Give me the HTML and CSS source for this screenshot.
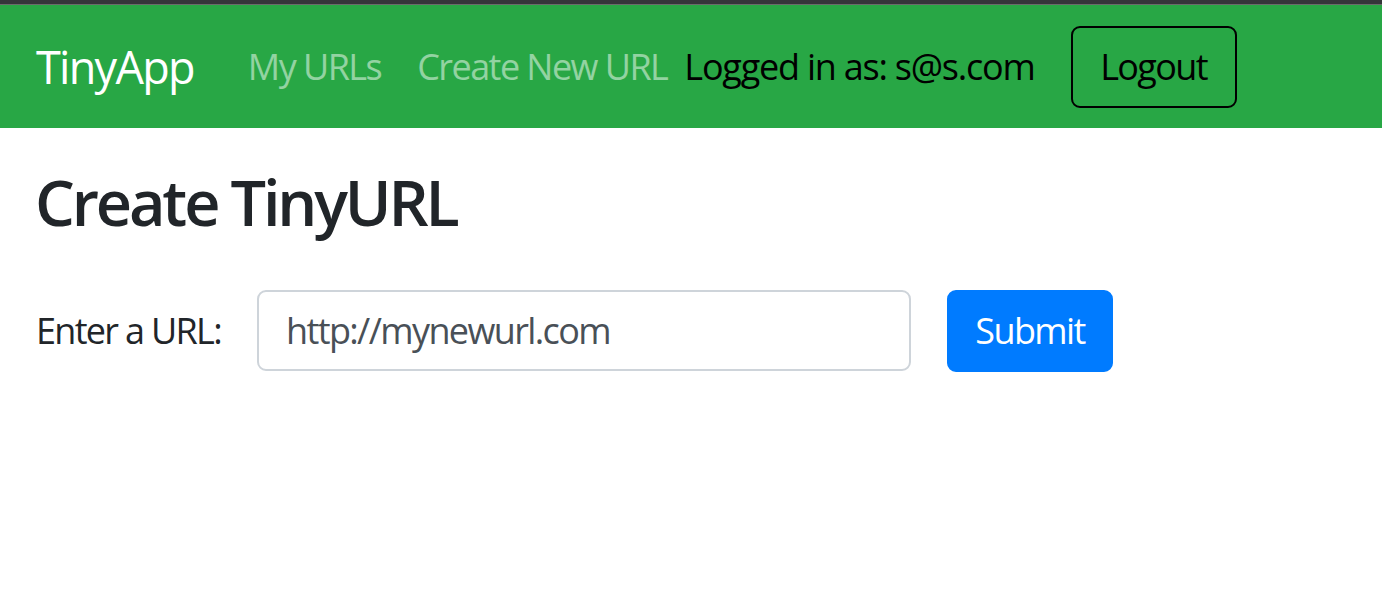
FILE: index.html
```html
<!DOCTYPE html>
<html lang="en">
<head>
<meta charset="utf-8">
<title>TinyApp</title>
<link rel="stylesheet" href="styles.css">
</head>
<body>
<div class="chrome-edge"></div>
<nav class="navbar">
  <a class="brand" href="#">TinyApp</a>
  <a class="nav-link" href="#">My URLs</a>
  <a class="nav-link" href="#">Create New URL</a>
  <span class="user">Logged in as: s@s.com</span>
  <button class="btn btn-outline" type="button">Logout</button>
</nav>
<main class="content">
  <h1 class="title">Create TinyURL</h1>
  <form class="url-form">
    <label class="label" for="longURL">Enter a URL:</label>
    <input class="input" id="longURL" type="text" value="http://mynewurl.com">
    <button class="btn btn-primary" type="button">Submit</button>
  </form>
</main>
</body>
</html>
```

FILE: styles.css
```css
* { box-sizing: border-box; }
html, body { margin: 0; padding: 0; background: #fff; }
body {
  font-family: "Open Sans", "Noto Sans", "Liberation Sans", sans-serif;
  color: #212529;
  letter-spacing: -0.042em;
}
.chrome-edge {
  height: 5px;
  background: #35363a;
  border-bottom: 1px solid #6b6b6b;
}
.navbar {
  display: flex;
  align-items: center;
  background: #28a745;
  height: 123px;
  padding: 0 36px;
}
.brand {
  font-size: 45px;
  color: #fff;
  text-decoration: none;
  margin-right: 36px;
  line-height: 1.5;
  letter-spacing: -0.038em;
}
.nav-link {
  font-size: 36px;
  color: rgba(255, 255, 255, 0.5);
  text-decoration: none;
  padding: 0 18px;
  line-height: 1.5;
  letter-spacing: -0.043em;
}
.nav-link + .nav-link {
  padding-right: 17px;
}
.user {
  font-size: 36px;
  color: #000;
  line-height: 1.5;
  letter-spacing: -0.034em;
}
.btn {
  font-family: inherit;
  font-size: 36px;
  line-height: 54px;
  padding: 12px 0;
  width: 166px;
  border-radius: 9px;
  border: 2px solid transparent;
  cursor: pointer;
  letter-spacing: -0.045em;
}
.btn-outline {
  margin-left: 36px;
  background: transparent;
  color: #000;
  border-color: #000;
}
.btn-primary {
  background: #007bff;
  border-color: #007bff;
  color: #fff;
  margin-left: 36px;
}
.content {
  padding: 0 36px;
}
.title {
  font-size: 63px;
  font-weight: 600;
  line-height: 1.2;
  margin: 36px 0 50px -1px;
  letter-spacing: -0.05em;
}
.url-form {
  display: flex;
  align-items: center;
}
.label {
  font-size: 36px;
  width: 221px;
  letter-spacing: -0.047em;
}
.input {
  font-family: inherit;
  width: 654px;
  height: 81px;
  font-size: 36px;
  padding: 0 27px;
  color: #495057;
  border: 2px solid #ced4da;
  border-radius: 9px;
  background: #fff;
  letter-spacing: -0.045em;
}
```
